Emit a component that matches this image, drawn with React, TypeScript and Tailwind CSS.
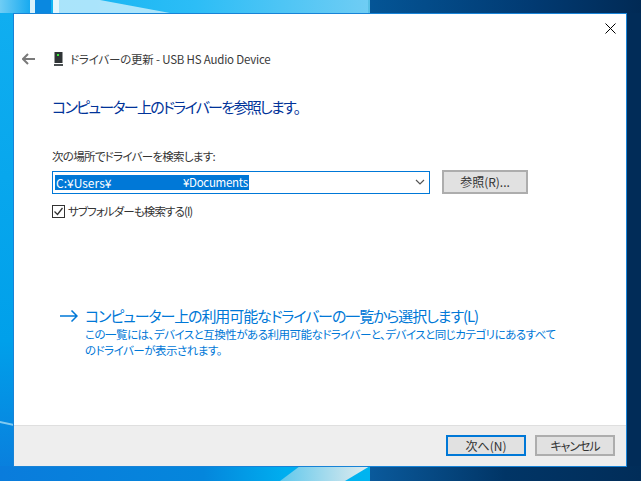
export default function App() {
  return (
    <div className="relative w-[641px] h-[481px] overflow-hidden pl-[13px] pt-[13px] bg-[#012c58] [font-feature-settings:'palt'] font-['Noto_Sans_CJK_JP','Liberation_Sans',sans-serif]">
      {/* wallpaper */}
      <svg className="absolute left-0 top-0" width="641" height="481">
        <defs>
          <linearGradient id="topLeft" x1="0" x2="1" y1="0" y2="0">
            <stop offset="0" stopColor="#6fcdf5" />
            <stop offset="1" stopColor="#18aaf0" />
          </linearGradient>
          <linearGradient id="topMid" x1="0" x2="1" y1="0" y2="0">
            <stop offset="0" stopColor="#12b4f2" />
            <stop offset="0.45" stopColor="#2cbdf6" />
            <stop offset="1" stopColor="#70cdf4" />
          </linearGradient>
          <linearGradient id="topRight" x1="0" x2="1" y1="0" y2="0">
            <stop offset="0" stopColor="#045596" />
            <stop offset="0.6" stopColor="#013a72" />
            <stop offset="1" stopColor="#012a55" />
          </linearGradient>
          <linearGradient id="left" x1="0" x2="0" y1="0" y2="1">
            <stop offset="0" stopColor="#10aef0" />
            <stop offset="0.7" stopColor="#00a0ea" />
            <stop offset="1" stopColor="#0a7cdc" />
          </linearGradient>
          <linearGradient id="bottom" x1="0" x2="1" y1="0" y2="0">
            <stop offset="0" stopColor="#0a7cdc" />
            <stop offset="0.55" stopColor="#0486dc" />
            <stop offset="0.77" stopColor="#00aeef" />
            <stop offset="1" stopColor="#00b4f0" />
          </linearGradient>
          <linearGradient id="beam" x1="0" x2="1" y1="0" y2="0">
            <stop offset="0" stopColor="#60c8ec" />
            <stop offset="1" stopColor="#e4ecee" />
          </linearGradient>
          <linearGradient id="bottomRight" x1="0" x2="1" y1="0" y2="0">
            <stop offset="0" stopColor="#0a5a9c" />
            <stop offset="0.5" stopColor="#013566" />
            <stop offset="1" stopColor="#012d59" />
          </linearGradient>
        </defs>
        <rect x="0" y="0" width="30" height="13" fill="url(#topLeft)" />
        <rect x="30" y="0" width="5" height="13" fill="#d8f1fb" />
        <rect x="35" y="0" width="16" height="13" fill="#0a88e0" />
        <rect x="51" y="0" width="319" height="13" fill="url(#topMid)" />
        <polygon points="53,0 100,0 170,13 58,13 53,13" fill="#c4ecfb" opacity="0.85" />
        <rect x="53" y="0" width="6" height="13" fill="#e4f6fd" />
        <rect x="370" y="0" width="271" height="13" fill="url(#topRight)" />
        <rect x="368" y="0" width="2" height="13" fill="#58c0e6" />
        <rect x="0" y="13" width="14" height="468" fill="url(#left)" />
        <polygon points="0,421 14,424 14,426 0,423" fill="#b8e6f6" opacity="0.7" />
        <rect x="0" y="466" width="370" height="15" fill="url(#bottom)" />
        <polygon points="300,466 370,466 345,481 280,481" fill="url(#beam)" />
        <rect x="370" y="466" width="271" height="15" fill="url(#bottomRight)" />
      </svg>

      <div className="relative w-[614px] h-[454px] border border-[#1883d7] bg-white flex flex-col">
        <div className="flex-1 flex flex-col">
          <div className="flex justify-end pt-[9px] pr-[10px] h-[28px]">
            <svg width="11" height="11" viewBox="0 0 11 11" className="text-black">
              <path d="M0.5 0.5L10.5 10.5M10.5 0.5L0.5 10.5" stroke="currentColor" strokeWidth="1" fill="none" />
            </svg>
          </div>

          <div className="flex items-center h-[18px] mt-[8px] pl-[8px]">
            <svg width="13" height="12" viewBox="0 0 13 12" className="text-[#7a7a7a]">
              <path d="M6 1L1 6L6 11M1 6H13" stroke="currentColor" strokeWidth="2" fill="none" />
            </svg>
            <svg width="9" height="14" viewBox="0 0 9 14" className="ml-[19px]">
              <rect x="0.5" y="0" width="8" height="11" fill="#2f3436" />
              <rect x="3" y="2" width="2" height="2" fill="#3ce83c" />
              <rect x="0" y="12" width="9" height="2" fill="#4a4f52" />
            </svg>
            <span className="ml-[7px] text-[11.5px] tracking-[-0.2px] leading-[18px] text-[#3a3a3a]">ドライバーの更新 - USB HS Audio Device</span>
          </div>

          <h1 className="mt-[29px] ml-[38px] text-[15px] tracking-[-1.7px] leading-[20px] font-normal text-[#003399] whitespace-nowrap">コンピューター上のドライバーを参照します。</h1>

          <p className="mt-[31px] ml-[38px] text-[11.5px] tracking-[-0.7px] leading-[16px] text-[#333]">次の場所でドライバーを検索します:</p>

          <div className="flex items-center mt-[6px] ml-[38px]">
            <div className="w-[378px] h-[23px] border border-[#0078d7] flex items-center pl-[2px] pr-[4px]">
              <span className="flex bg-[#0078d7] text-white text-[12px] leading-[15px] h-[15px] w-[194px] pl-[1px] whitespace-nowrap">
                <span className="w-[127px]">C:¥Users¥</span>
                <span className="text-[11.5px] tracking-[-0.3px]">¥Documents</span>
              </span>
              <svg width="10" height="6" viewBox="0 0 10 6" className="ml-auto text-[#555]">
                <path d="M1 1L5 5L9 1" stroke="currentColor" strokeWidth="1.2" fill="none" />
              </svg>
            </div>
            <button className="ml-[12px] w-[86px] h-[24px] bg-[#e1e1e1] border-2 border-[#adadad] text-[12px] leading-[18px] text-[#333]">参照(R)...</button>
          </div>

          <label className="flex items-center mt-[9px] ml-[38px]">
            <span className="w-[13px] h-[13px] border border-[#333] flex items-center justify-center bg-white">
              <svg width="11" height="11" viewBox="0 0 11 11">
                <path d="M1.5 5.5L4.5 8.5L9.5 2" stroke="#333" strokeWidth="1.3" fill="none" />
              </svg>
            </span>
            <span className="ml-[3px] text-[11.5px] tracking-[-0.9px] leading-[16px] text-[#333]">サブフォルダーも検索する(I)</span>
          </label>

          <div className="flex mt-[87px] ml-[46px]">
            <svg width="18" height="12" viewBox="0 0 18 12" className="mt-[4px] text-[#0078d7] shrink-0">
              <path d="M0 6H17M11.5 0.5L17 6L11.5 11.5" stroke="currentColor" strokeWidth="1.5" fill="none" />
            </svg>
            <div className="ml-[7px]">
              <div className="text-[15px] tracking-[-1.1px] leading-[20px] text-[#0078d7] whitespace-nowrap">コンピューター上の利用可能なドライバーの一覧から選択します(L)</div>
              <div className="text-[11.5px] tracking-[-0.5px] leading-[16px] text-[#0078d7] whitespace-nowrap">
                この一覧には、デバイスと互換性がある利用可能なドライバーと、デバイスと同じカテゴリにあるすべて
                <br />
                のドライバーが表示されます。
              </div>
            </div>
          </div>
        </div>

        <div className="h-[41px] border-t-[1px] border-[#dfdfdf] bg-[#eeeeee] flex items-start justify-end pt-[9px] pr-[11px] gap-[9px]">
          <button className="w-[80px] h-[21px] bg-[#e1e1e1] border-2 border-[#0078d7] text-[12px] leading-[16px] text-[#333]">次へ(N)</button>
          <button className="w-[80px] h-[21px] bg-[#e1e1e1] border-2 border-[#adadad] text-[12px] tracking-[-1px] leading-[16px] text-[#333]">キャンセル</button>
        </div>
      </div>
    </div>
  )
}
